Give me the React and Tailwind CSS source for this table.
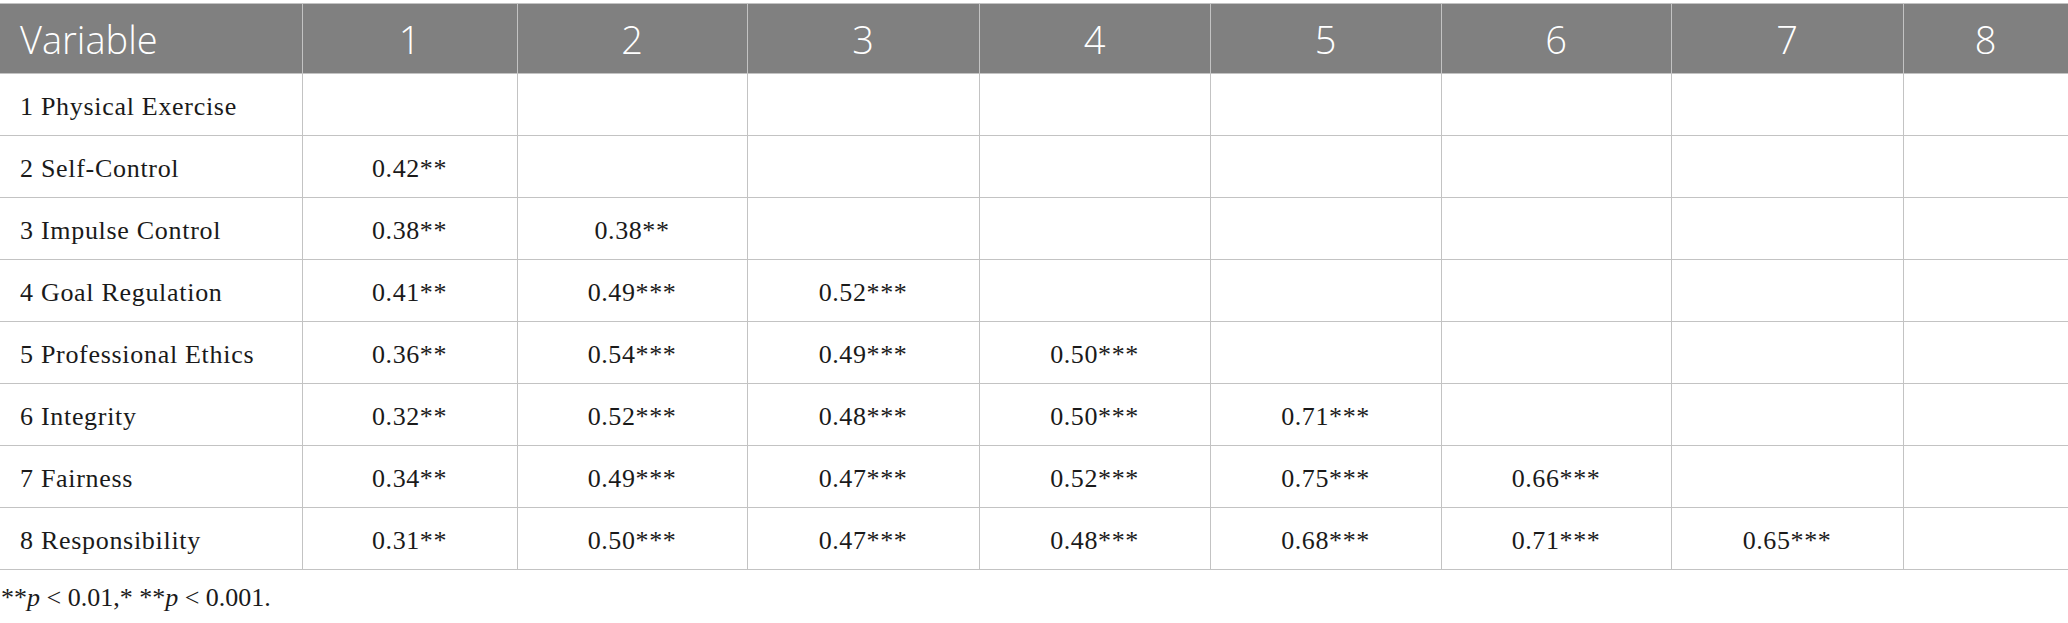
import React from "react";

const columns = ["Variable", "1", "2", "3", "4", "5", "6", "7", "8"];
const widths = [
  "w-[302px]",
  "w-[215px]",
  "w-[230px]",
  "w-[232px]",
  "w-[231px]",
  "w-[231px]",
  "w-[230px]",
  "w-[232px]",
  "w-[165px]",
];

const rows = [
  { name: "1 Physical Exercise", values: [] },
  { name: "2 Self-Control", values: ["0.42**"] },
  { name: "3 Impulse Control", values: ["0.38**", "0.38**"] },
  { name: "4 Goal Regulation", values: ["0.41**", "0.49***", "0.52***"] },
  { name: "5 Professional Ethics", values: ["0.36**", "0.54***", "0.49***", "0.50***"] },
  { name: "6 Integrity", values: ["0.32**", "0.52***", "0.48***", "0.50***", "0.71***"] },
  { name: "7 Fairness", values: ["0.34**", "0.49***", "0.47***", "0.52***", "0.75***", "0.66***"] },
  {
    name: "8 Responsibility",
    values: ["0.31**", "0.50***", "0.47***", "0.48***", "0.68***", "0.71***", "0.65***"],
  },
];

const App = () => {
  return (
    <div className="w-[2068px] h-[623px] bg-white pt-[3px]">
      <table className="table-fixed border-collapse w-[2067px]">
        <thead>
          <tr className="h-[70px] bg-[#808080]">
            {columns.map((col, i) => (
              <th
                key={col}
                className={`${widths[i]} border border-[#c3c3c3] border-l-0 font-light leading-none text-white text-[38px] pt-[1px] font-['Open_Sans',sans-serif] ${
                  i === 0 ? "text-left pl-[20px]" : "text-center"
                }`}
              >
                {col}
              </th>
            ))}
          </tr>
        </thead>
        <tbody>
          {rows.map((row) => (
            <tr key={row.name} className="h-[62px]">
              <td className="border border-[#c3c3c3] border-l-0 pl-[20px] pt-[3px] text-left text-[26px] tracking-[0.7px] text-[#1a1a1a] font-['Liberation_Serif',serif]">
                {row.name}
              </td>
              {columns.slice(1).map((col, i) => (
                <td
                  key={col}
                  className="border border-[#c3c3c3] pt-[3px] text-center text-[26px] tracking-[0.6px] text-[#1a1a1a] font-['Liberation_Serif',serif]"
                >
                  {row.values[i] || ""}
                </td>
              ))}
            </tr>
          ))}
        </tbody>
      </table>
      <p className="mt-[8px] pl-[1px] text-[26px] text-[#1a1a1a] font-['Liberation_Serif',serif]">
        **<i>p</i> &lt; 0.01,* **<i>p</i> &lt; 0.001.
      </p>
    </div>
  );
};

export default App;
